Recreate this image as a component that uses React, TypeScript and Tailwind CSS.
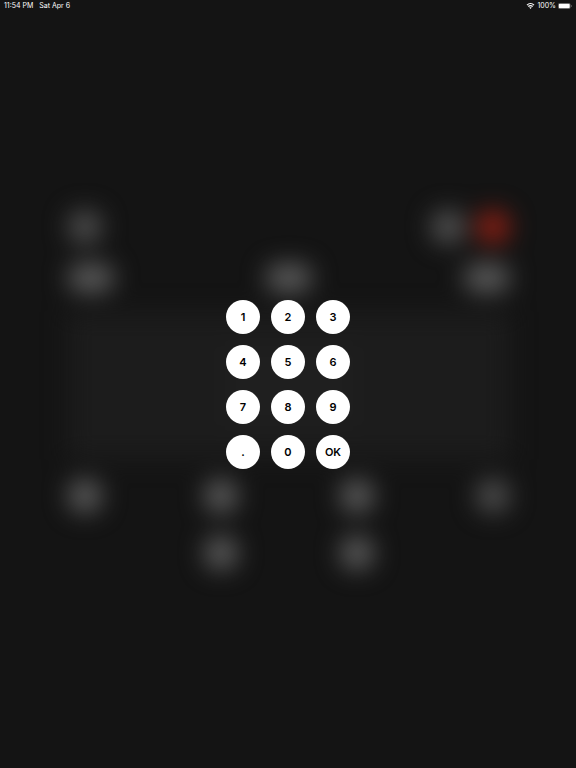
import React from "react";

const keys: string[] = ["1", "2", "3", "4", "5", "6", "7", "8", "9", ".", "0", "OK"];

function StatusBar() {
  return (
    <header className="flex h-3 items-center justify-between px-1 text-[7px] leading-3 text-white">
      <div className="flex gap-1.5">
        <span>11:54 PM</span>
        <span>Sat Apr 6</span>
      </div>
      <div className="flex items-center gap-0.5">
        <svg viewBox="0 0 16 12" className="h-[6px] w-[9px]" fill="none" stroke="currentColor" aria-label="Wi-Fi">
          <path d="M1 4.2C5 .4 11 .4 15 4.2" strokeWidth="2.6" />
          <path d="M3.6 7.2C6.2 4.8 9.8 4.8 12.4 7.200" strokeWidth="2.6" />
          <path d="M8 11.8 5.5 9.2C7 8 9 8 10.5 9.2Z" fill="currentColor" stroke="none" />
        </svg>
        <span>100%</span>
        <svg viewBox="0 0 28 12" className="h-[6px] w-[14px]" aria-label="Battery full">
          <rect x="0.5" y="0.5" width="24" height="11" rx="3" fill="none" stroke="#8a8a8a" />
          <rect x="1.5" y="1.5" width="22" height="9" rx="2" fill="white" />
          <path d="M26 4c2 .6 2 3.400 0 4Z" fill="#8a8a8a" />
        </svg>
      </div>
    </header>
  );
}

function Dot({ className = "bg-[#5c5c5c]" }: { className?: string }) {
  return <div className={`size-[34px] rounded-full ${className}`} />;
}

function Pill() {
  return <div className="h-7 w-[46px] rounded-full bg-[#5c5c5c]" />;
}

function BlurredControls() {
  return (
    <div aria-hidden="true" className="flex flex-1 flex-col justify-center gap-5 pr-[66px] pl-[68px] blur-[12px]">
      <div className="flex justify-between">
        <Dot className="bg-[#4e4e4e]" />
        <div className="flex gap-[11px]">
          <Dot className="bg-[#525252]" />
          <Dot className="bg-[#881f14]" />
        </div>
      </div>
      <div className="flex justify-between">
        <Pill />
        <Pill />
        <Pill />
      </div>
      <div className="flex h-[147px] items-center justify-center bg-[#1c1c1c]">
        <div className="h-20 w-32 rounded-lg bg-[#1f1f1f]" />
      </div>
      <div className="flex justify-between">
        <Dot />
        <Dot />
        <Dot />
        <Dot className="bg-[#4e4e4e]" />
      </div>
      <div className="mt-[3px] flex justify-center gap-[102px]">
        <Dot />
        <Dot />
      </div>
    </div>
  );
}

function Keypad() {
  return (
    <div className="grid grid-cols-3 gap-[11px]">
      {keys.map((key) => (
        <button
          key={key}
          type="button"
          className="flex size-[34px] items-center justify-center rounded-full bg-white text-[11px] leading-4 font-semibold text-black"
        >
          {key}
        </button>
      ))}
    </div>
  );
}

export default function App() {
  return (
    <div className="grid min-h-screen overflow-hidden bg-[#141414] font-['Inter',sans-serif]">
      <div className="col-start-1 row-start-1 flex flex-col">
        <StatusBar />
        <BlurredControls />
      </div>
      <main className="z-10 col-start-1 row-start-1 place-self-center">
        <Keypad />
      </main>
    </div>
  );
}
